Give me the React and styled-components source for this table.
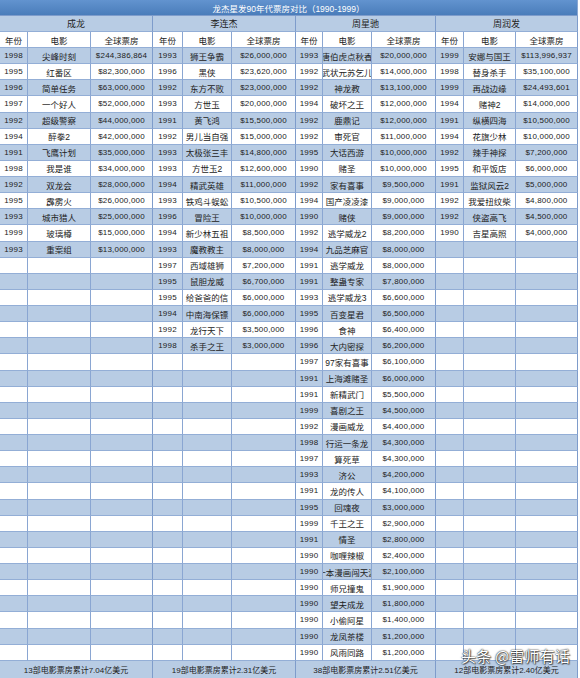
import React from 'react';
import styled, { createGlobalStyle } from 'styled-components';

const GlobalStyle = createGlobalStyle`
    body {
        margin: 0;
        background: #fff;
    }
`;

const Page = styled.div`
    position: relative;
    width: 580px;
    height: 678px;
    overflow: hidden;
    background: #fff;
    font-family: "Liberation Sans", "Noto Sans CJK SC", sans-serif;
    color: #222;
`;

const Sheet = styled.div`
    display: grid;
    width: 578px;
    grid-template-columns: 28px 63px 62px 30px 49px 64px 27px 49px 64px 28px 52px 62px;
    grid-template-rows: 16px 16px 16px repeat(38, 16.13px) 17px;
`;

const Cell = styled.div`
    box-sizing: border-box;
    display: flex;
    align-items: center;
    justify-content: center;
    overflow: hidden;
    white-space: nowrap;
    font-size: ${({ $num }) => ($num ? '8px' : '8.5px')};
    letter-spacing: ${({ $num }) => ($num ? '0.2px' : '0')};
    border-right: 1px solid ${({ $edge }) => ($edge ? '#7e9ccb' : '#8aa6d2')};
    border-bottom: 1px solid #93aed6;
    background: ${({ $shade }) => ($shade ? '#b8cce4' : '#fff')};
`;

const TitleCell = styled(Cell)`
    grid-column: 1 / -1;
    background: linear-gradient(#6293cf, #4a7dba);
    color: #fff;
    font-size: 8.5px;
    border-bottom: 1px solid #7e9ccb;
`;

const GroupCell = styled(Cell)`
    grid-column: span 3;
    font-size: 9px;
`;

const FooterCell = styled(Cell)`
    grid-column: span 3;
    font-size: 8px;
    letter-spacing: 0;
    border-bottom: 0;
`;

const Watermark = styled.div`
    position: absolute;
    left: 461px;
    top: 647px;
    font-family: "Noto Sans CJK SC", sans-serif;
    font-size: 15px;
    line-height: 18px;
    color: #fff;
    letter-spacing: 0.2px;
    text-shadow: 0 0 1px rgba(0, 0, 0, 0.9), 0 0 2px rgba(0, 0, 0, 0.7), 1px 1px 1px rgba(0, 0, 0, 0.5);
`;

const STARS = [
    {
        name: '成龙',
        total: '13部电影票房累计7.04亿美元',
        films: [
            ['1998', '尖峰时刻', '$244,386,864'],
            ['1995', '红番区', '$82,300,000'],
            ['1996', '简单任务', '$63,000,000'],
            ['1997', '一个好人', '$52,000,000'],
            ['1992', '超级警察', '$44,000,000'],
            ['1994', '醉拳2', '$42,000,000'],
            ['1991', '飞鹰计划', '$35,000,000'],
            ['1998', '我是谁', '$34,000,000'],
            ['1992', '双龙会', '$28,000,000'],
            ['1995', '霹雳火', '$26,000,000'],
            ['1993', '城市猎人', '$25,000,000'],
            ['1999', '玻璃樽', '$15,000,000'],
            ['1993', '重案组', '$13,000,000'],
        ],
    },
    {
        name: '李连杰',
        total: '19部电影票房累计2.31亿美元',
        films: [
            ['1993', '狮王争霸', '$26,000,000'],
            ['1996', '黑侠', '$23,620,000'],
            ['1992', '东方不败', '$23,000,000'],
            ['1993', '方世玉', '$20,000,000'],
            ['1991', '黄飞鸿', '$15,500,000'],
            ['1992', '男儿当自强', '$15,000,000'],
            ['1993', '太极张三丰', '$14,800,000'],
            ['1993', '方世玉2', '$12,600,000'],
            ['1994', '精武英雄', '$11,000,000'],
            ['1993', '铁鸡斗蜈蚣', '$10,500,000'],
            ['1996', '冒险王', '$10,000,000'],
            ['1994', '新少林五祖', '$8,500,000'],
            ['1993', '魔教教主', '$8,000,000'],
            ['1997', '西域雄狮', '$7,200,000'],
            ['1995', '鼠胆龙威', '$6,700,000'],
            ['1995', '给爸爸的信', '$6,000,000'],
            ['1994', '中南海保镖', '$6,000,000'],
            ['1992', '龙行天下', '$3,500,000'],
            ['1998', '杀手之王', '$3,000,000'],
        ],
    },
    {
        name: '周星驰',
        total: '38部电影票房累计2.51亿美元',
        films: [
            ['1993', '唐伯虎点秋香', '$20,000,000'],
            ['1992', '武状元苏乞儿', '$14,000,000'],
            ['1992', '神龙教', '$13,100,000'],
            ['1994', '破坏之王', '$12,000,000'],
            ['1992', '鹿鼎记', '$12,000,000'],
            ['1992', '审死官', '$11,000,000'],
            ['1995', '大话西游', '$10,000,000'],
            ['1990', '赌圣', '$10,000,000'],
            ['1992', '家有喜事', '$9,500,000'],
            ['1994', '国产凌凌漆', '$9,000,000'],
            ['1990', '赌侠', '$9,000,000'],
            ['1992', '逃学威龙2', '$8,200,000'],
            ['1994', '九品芝麻官', '$8,000,000'],
            ['1991', '逃学威龙', '$8,000,000'],
            ['1991', '整蛊专家', '$7,800,000'],
            ['1993', '逃学威龙3', '$6,600,000'],
            ['1995', '百变星君', '$6,500,000'],
            ['1996', '食神', '$6,400,000'],
            ['1996', '大内密探', '$6,200,000'],
            ['1997', '97家有喜事', '$6,100,000'],
            ['1991', '上海滩赌圣', '$6,000,000'],
            ['1991', '新精武门', '$5,500,000'],
            ['1999', '喜剧之王', '$4,500,000'],
            ['1992', '漫画威龙', '$4,400,000'],
            ['1998', '行运一条龙', '$4,300,000'],
            ['1997', '算死草', '$4,300,000'],
            ['1993', '济公', '$4,200,000'],
            ['1991', '龙的传人', '$4,100,000'],
            ['1995', '回魂夜', '$3,000,000'],
            ['1999', '千王之王', '$2,900,000'],
            ['1991', '情圣', '$2,800,000'],
            ['1990', '咖喱辣椒', '$2,400,000'],
            ['1990', '一本漫画闯天涯', '$2,100,000'],
            ['1990', '师兄撞鬼', '$1,900,000'],
            ['1990', '望夫成龙', '$1,800,000'],
            ['1990', '小偷阿星', '$1,400,000'],
            ['1990', '龙凤茶楼', '$1,200,000'],
            ['1990', '风雨同路', '$1,200,000'],
        ],
    },
    {
        name: '周润发',
        total: '12部电影票房累计2.40亿美元',
        films: [
            ['1999', '安娜与国王', '$113,996,937'],
            ['1998', '替身杀手', '$35,100,000'],
            ['1999', '再战边缘', '$24,493,601'],
            ['1994', '赌神2', '$14,000,000'],
            ['1991', '纵横四海', '$10,500,000'],
            ['1994', '花旗少林', '$10,000,000'],
            ['1992', '辣手神探', '$7,200,000'],
            ['1995', '和平饭店', '$6,000,000'],
            ['1991', '监狱风云2', '$5,000,000'],
            ['1992', '我爱扭纹柴', '$4,800,000'],
            ['1992', '侠盗高飞', '$4,500,000'],
            ['1990', '吉星高照', '$4,000,000'],
        ],
    },
];

const ROWS = 38;

const App = () => {
    const rows = Array.from({ length: ROWS }, (_, i) => i);

    return (
        <Page>
            <GlobalStyle />
            <Sheet>
                <TitleCell>龙杰星发90年代票房对比（1990-1999）</TitleCell>

                {STARS.map((s) => (
                    <GroupCell key={s.name} $shade $edge>{s.name}</GroupCell>
                ))}

                {STARS.map((s) => (
                    <React.Fragment key={s.name + '-head'}>
                        <Cell>年份</Cell>
                        <Cell>电影</Cell>
                        <Cell $edge>全球票房</Cell>
                    </React.Fragment>
                ))}

                {rows.map((i) =>
                    STARS.map((s) => {
                        const film = s.films[i] || ['', '', ''];
                        const shade = i % 2 === 0;
                        return (
                            <React.Fragment key={`${s.name}-${i}`}>
                                <Cell $shade={shade} $num>{film[0]}</Cell>
                                <Cell $shade={shade}>{film[1]}</Cell>
                                <Cell $shade={shade} $num $edge>{film[2]}</Cell>
                            </React.Fragment>
                        );
                    })
                )}

                {STARS.map((s) => (
                    <FooterCell key={s.name + '-total'} $shade $edge>{s.total}</FooterCell>
                ))}
            </Sheet>
            <Watermark>头条 @雷师有话</Watermark>
        </Page>
    );
};

export default App;
